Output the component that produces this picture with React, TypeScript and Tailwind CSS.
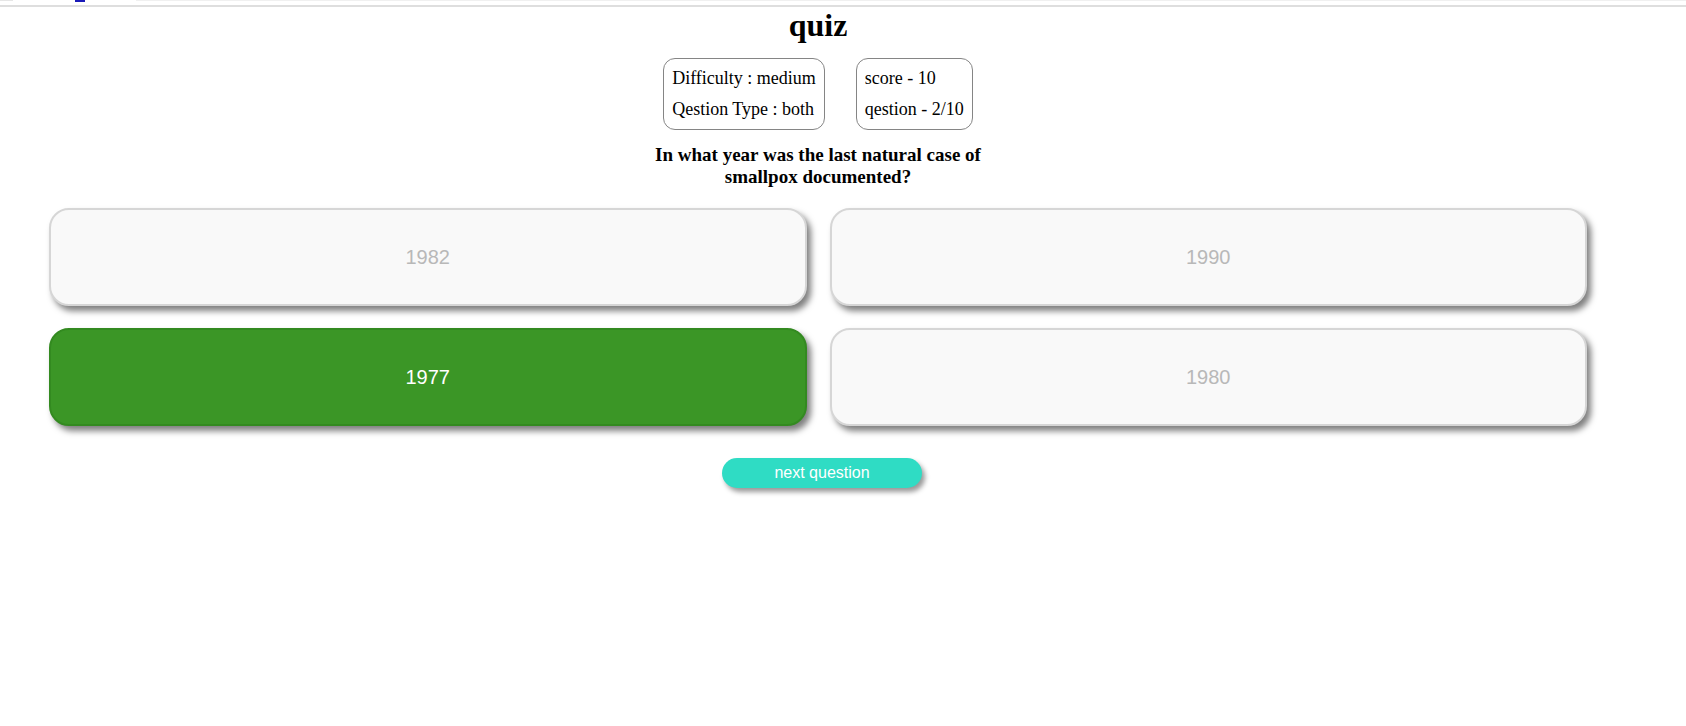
import React, { useState } from 'react'

type Answer = {
  label: string
  correct: boolean
}

const answers: Answer[] = [
  { label: '1982', correct: false },
  { label: '1990', correct: false },
  { label: '1977', correct: true },
  { label: '1980', correct: false },
]

export default function App() {
  const [picked] = useState<string | null>('1977')

  return (
    <div className="min-h-screen w-full bg-white">
      {/* restos da barra de cima, cortada no print */}
      <div className="relative h-[7px] w-full border-b-2 border-[#dedede]">
        <div className="absolute left-0 top-0 h-px w-[13px] bg-[#e6e6e6]" />
        <div className="absolute left-[75px] top-0 h-[2px] w-[10px] bg-[#1a1ab8]" />
        <div className="absolute left-[136px] right-0 top-0 h-px bg-[#f0f0f0]" />
      </div>

      <div className="flex w-[1636px] flex-col items-center">
        <h1 className="font-['Liberation_Serif',serif] text-[32px] font-bold leading-[37px] text-black">quiz</h1>

        <div className="mt-[14px] flex gap-[31px] font-['Liberation_Serif',serif] text-[18px] leading-[21px] text-black">
          <div className="flex flex-col gap-[10px] rounded-[12px] border border-[#858585] px-[8px] py-[9px]">
            <span>Difficulty : medium</span>
            <span>Qestion Type : both</span>
          </div>
          <div className="flex flex-col gap-[10px] rounded-[12px] border border-[#858585] px-[8px] py-[9px]">
            <span>score - 10</span>
            <span>qestion - 2/10</span>
          </div>
        </div>

        <h3 className="mt-[14px] w-[345px] text-center font-['Liberation_Serif',serif] text-[19px] font-bold leading-[22px] text-black">
          In what year was the last natural case of smallpox documented?
        </h3>

        <div className="mt-[20px] grid w-[1538px] grid-cols-2 gap-x-[23px] gap-y-[22px]">
          {answers.map(a => {
            const isGreen = picked !== null && a.correct
            return (
              <button
                key={a.label}
                className={
                  isGreen
                    ? "flex h-[98px] items-center justify-center rounded-[20px] border-2 border-[#338a20] bg-[#3b9626] font-['Liberation_Sans',Arial,sans-serif] text-[20px] text-white shadow-[4px_5px_6px_rgba(0,0,0,0.5)]"
                    : "flex h-[98px] items-center justify-center rounded-[20px] border-2 border-[#d6d6d6] bg-[#f9f9f9] font-['Liberation_Sans',Arial,sans-serif] text-[20px] text-[#b8b8b8] shadow-[4px_5px_6px_rgba(0,0,0,0.5)]"
                }
              >
                {a.label}
              </button>
            )
          })}
        </div>

        <button className="ml-[8px] mt-[32px] h-[30px] w-[200px] rounded-full bg-[#2fdcc4] font-['Liberation_Sans',Arial,sans-serif] text-[16px] text-white shadow-[3px_4px_5px_rgba(0,0,0,0.4)]">
          next question
        </button>
      </div>
    </div>
  )
}
